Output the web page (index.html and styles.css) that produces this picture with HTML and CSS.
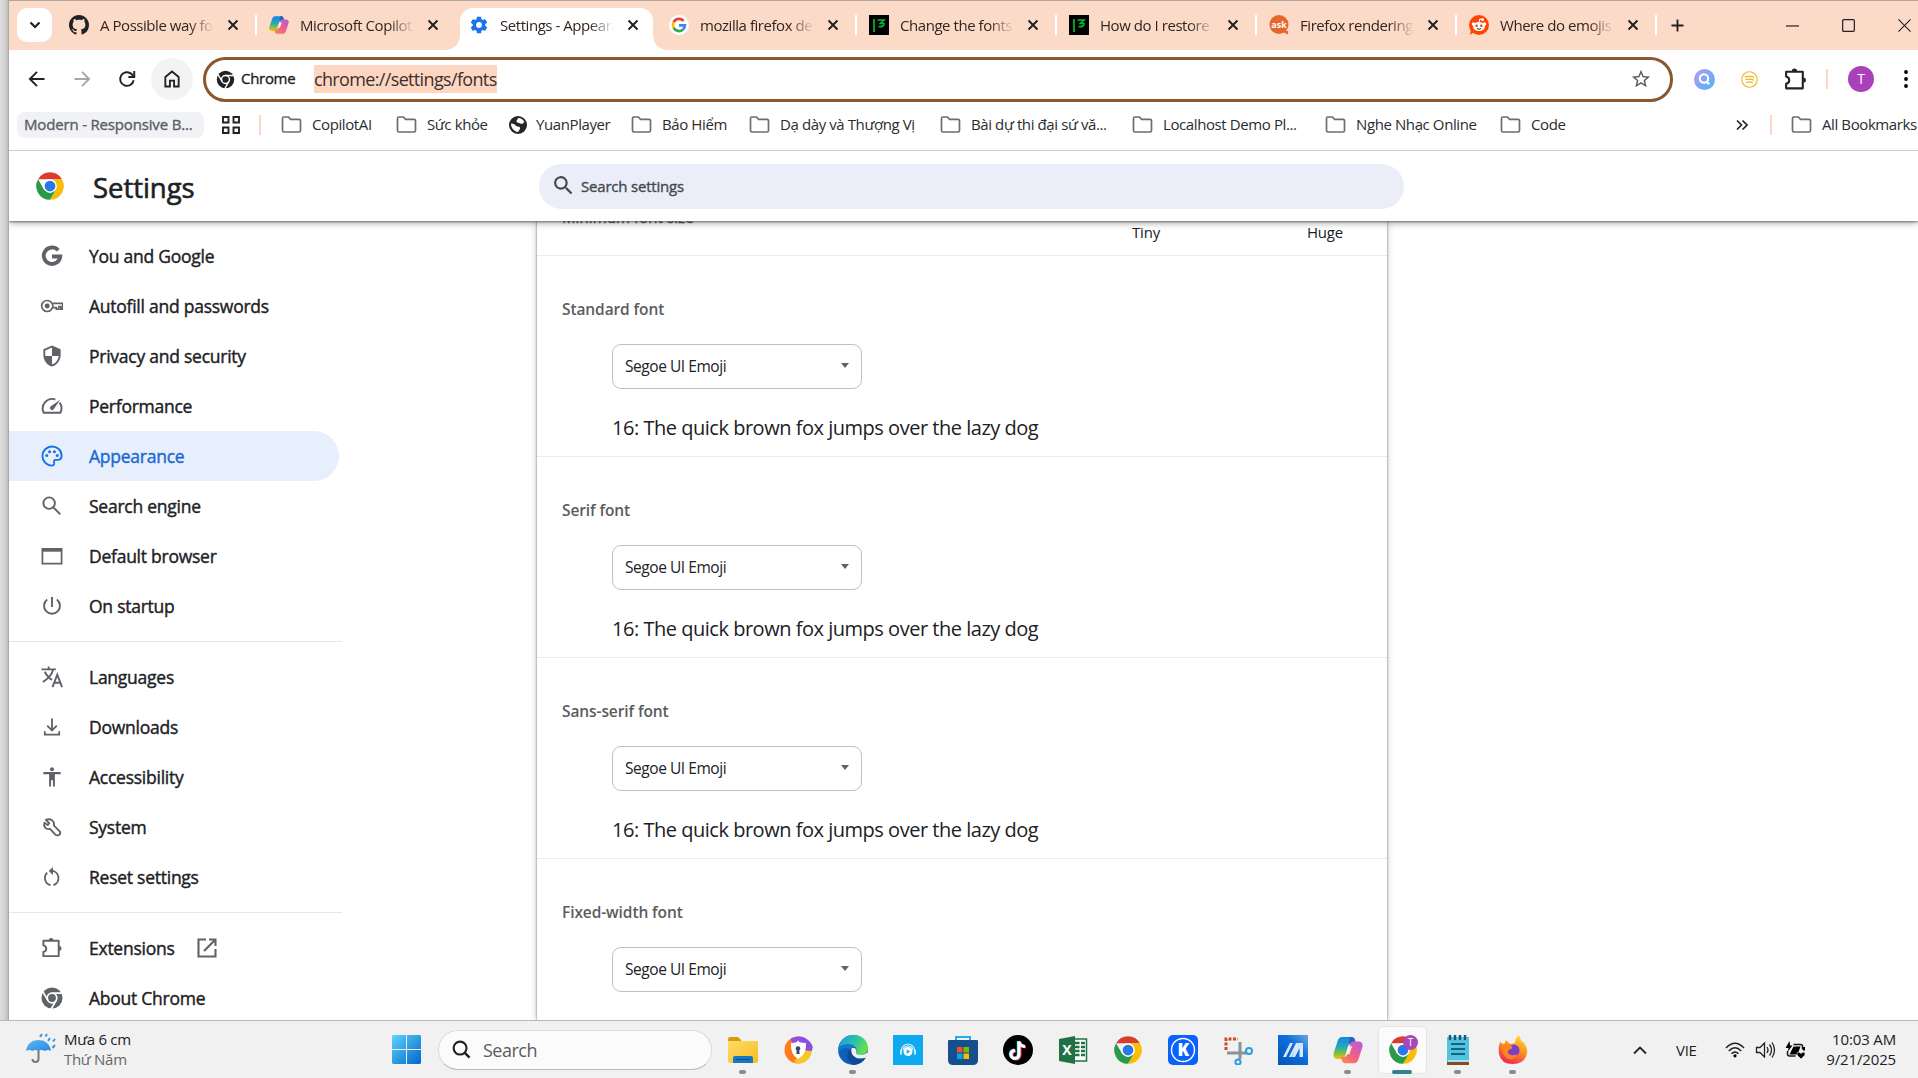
FILE: index.html
```html
<!DOCTYPE html>
<html lang="en">
<head>
<meta charset="utf-8">
<title>Settings - Appearance</title>
<link rel="stylesheet" href="styles.css">
</head>
<body>
<svg class="sprite" aria-hidden="true">
  <defs>
    <linearGradient id="gCopA" x1="0" y1="0" x2="0" y2="1"><stop offset="0" stop-color="#1686e0"/><stop offset=".45" stop-color="#22a7c4"/><stop offset=".72" stop-color="#73c045"/><stop offset="1" stop-color="#f4c20d"/></linearGradient>
    <linearGradient id="gCopB" x1="1" y1="0" x2="0" y2="1"><stop offset="0" stop-color="#b45ae0"/><stop offset=".5" stop-color="#ec5f8d"/><stop offset="1" stop-color="#ff8b45"/></linearGradient>
    <linearGradient id="gWin" x1="0" y1="0" x2="1" y2="1"><stop offset="0" stop-color="#5fd4fb"/><stop offset="1" stop-color="#0067c8"/></linearGradient>
    <linearGradient id="gEdge" x1="0" y1="0" x2="1" y2=".4"><stop offset="0" stop-color="#1b9de0"/><stop offset=".6" stop-color="#2cc3a5"/><stop offset="1" stop-color="#66dd4f"/></linearGradient>
    <linearGradient id="gFire" x1=".8" y1="0" x2=".3" y2="1"><stop offset="0" stop-color="#ffe22e"/><stop offset=".45" stop-color="#ff9220"/><stop offset="1" stop-color="#ee2453"/></linearGradient>
    <linearGradient id="gBlue" x1="0" y1="1" x2="1" y2="0"><stop offset="0" stop-color="#0554b4"/><stop offset=".6" stop-color="#0f6ede"/><stop offset="1" stop-color="#6da4e4"/></linearGradient>
    <linearGradient id="gLens" x1="0" y1="0" x2="1" y2="1"><stop offset="0" stop-color="#b69cf5"/><stop offset="1" stop-color="#4db5f5"/></linearGradient>
    <linearGradient id="gFold" x1="0" y1="0" x2="1" y2="1"><stop offset="0" stop-color="#ffdd66"/><stop offset="1" stop-color="#f8bc22"/></linearGradient>
    <linearGradient id="gUmb" x1="0" y1="0" x2="1" y2="1"><stop offset="0" stop-color="#64b9f5"/><stop offset="1" stop-color="#2587e0"/></linearGradient>
  </defs>
  <symbol id="close" viewBox="0 0 12 12"><path d="M1.500 1.500l9 9M10.500 1.500l-9 9" stroke="currentColor" stroke-width="2" fill="none"/></symbol>
  <symbol id="github" viewBox="0 0 16 16"><path fill="currentColor" d="M8 0C3.580 0 0 3.580 0 8c0 3.540 2.290 6.530 5.470 7.590.4.070.55-.17.55-.38 0-.19-.01-.82-.01-1.490-2.010.37-2.530-.49-2.690-.94-.09-.23-.48-.94-.82-1.130-.28-.15-.68-.52-.01-.53.63-.01 1.080.58 1.230.82.72 1.210 1.870.87 2.330.66.07-.52.28-.87.51-1.070-1.780-.2-3.640-.89-3.640-3.950 0-.87.31-1.590.82-2.150-.08-.2-.36-1.020.08-2.120 0 0 .67-.21 2.200.82.64-.18 1.320-.27 2-.27s1.360.09 2 .27c1.530-1.040 2.200-.82 2.200-.82.44 1.100.16 1.920.08 2.120.51.56.82 1.270.82 2.150 0 3.070-1.870 3.750-3.650 3.950.29.25.54.73.54 1.480 0 1.070-.01 1.930-.01 2.200 0 .21.15.46.55.38A8.010 8.010 0 0 0 16 8c0-4.420-3.580-8-8-8z"/></symbol>
  <symbol id="copilot" viewBox="0 0 32 32"><path fill="url(#gCopA)" d="M10 2h9c2 0 3 1 3.600 3l1 4h-4c-2 0-3 1-3.600 3l-3 10c-.8 2.500-2 3.500-4 3.500H5c-4 0-5.500-3-4-7L5 6c1-2.700 2.500-4 5-4z"/><path fill="#2456c9" d="M18 2h2c2 0 3 1 3.600 3l1 4h-5c-1.500 0-2.500.6-3.200 2z" opacity=".8"/><path fill="url(#gCopB)" d="M22 30h-9c-2 0-3-1-3.600-3l-1-3.600h3c2 0 3-1 3.600-3l3-10c.7-2.300 2-3.400 4-3.400h5c4 0 5.500 3 4 7l-4 12c-1 2.700-2.500 4-5 4z"/><path fill="#fff" opacity=".85" d="M17 12h3.500l-3 8.500H14z"/></symbol>
  <symbol id="gear" viewBox="0 0 24 24"><path fill="#1a73e8" fill-rule="evenodd" d="M19.430 13c.04-.32.07-.65.07-1s-.03-.68-.07-1l2.110-1.650c.2-.15.250-.42.120-.64l-2-3.460c-.12-.22-.38-.3-.61-.22l-2.490 1a7.300 7.300 0 0 0-1.690-.98l-.38-2.650A.5.5 0 0 0 14 2h-4c-.25 0-.46.180-.49.420l-.38 2.650c-.61.250-1.170.590-1.690.980l-2.490-1c-.23-.09-.49 0-.61.220l-2 3.460c-.13.220-.07.490.120.640L4.570 11c-.04.320-.07.660-.07 1s.03.680.07 1l-2.110 1.650c-.19.150-.24.420-.12.640l2 3.460c.12.220.39.300.61.220l2.490-1c.52.400 1.080.730 1.690.980l.38 2.650c.03.240.24.400.49.400h4c.25 0 .46-.18.49-.42l.38-2.650c.61-.25 1.170-.59 1.690-.98l2.490 1c.23.090.49 0 .61-.22l2-3.460a.5.5 0 0 0-.12-.64zM12 15.500a3.500 3.500 0 1 1 0-7 3.500 3.500 0 0 1 0 7z"/></symbol>
  <symbol id="google" viewBox="0 0 20 20"><circle cx="10" cy="10" r="10" fill="#fff"/><g fill="none" stroke-width="2.700"><path stroke="#ea4335" d="M14.600 5.800A6 6 0 0 0 4.700 7.200"/><path stroke="#fbbc05" d="M4.700 7.200a6 6 0 0 0 0 5.600"/><path stroke="#34a853" d="M4.700 12.800a6 6 0 0 0 9.300 1.700"/><path stroke="#4285f4" d="M14 14.500a6 6 0 0 0 2-4.200H10"/></g></symbol>
  <symbol id="bm" viewBox="0 0 20 20"><path d="M0 0h20v20H0z"/><path d="M5 4v13M8.500 5h6.500l-3.500 3.500h3.500c.5 2.500-2 3.500-5.500 3" fill="none" stroke="#08b82c" stroke-width="1.700"/></symbol>
  <symbol id="ask" viewBox="0 0 20 20"><circle cx="10" cy="9.500" r="9.500" fill="#e5672d"/><path d="M12 16h7v3.500z" fill="#e5672d"/><text x="10" y="12.500" text-anchor="middle" font-size="9" font-weight="700" fill="#fff" font-family="Open Sans, sans-serif">ask</text></symbol>
  <symbol id="reddit" viewBox="0 0 20 20"><circle cx="10" cy="10" r="10" fill="#ff4500"/><path d="M1 20l4-3-3-3z" fill="#ff4500"/><ellipse cx="10" cy="11.500" rx="6" ry="4.600" fill="#fff"/><circle cx="4.500" cy="9" r="1.700" fill="#fff"/><circle cx="15.500" cy="9" r="1.700" fill="#fff"/><circle cx="13.500" cy="4.500" r="1.500" fill="#fff"/><path d="M10 8l.8-4 2.500.6" stroke="#fff" fill="none"/><circle cx="7.700" cy="10.700" r="1.200" fill="#e33c00"/><circle cx="12.300" cy="10.700" r="1.200" fill="#e33c00"/><path d="M8 13.500q2 1.500 4 0" stroke="#222" fill="none"/></symbol>
  <symbol id="chromeMono" viewBox="0 0 24 24"><path fill="currentColor" fill-rule="evenodd" d="M12 1a11 11 0 1 0 0 22 11 11 0 0 0 0-22z"/><g fill="none" stroke="#fff" stroke-width="1.800"><circle cx="12" cy="12" r="5"/><path d="M12 7h10.500M7.700 14.500L2.400 5.400M16.300 14.500L11 23.700"/></g></symbol>
  <symbol id="chrome" viewBox="0 0 24 24"><path fill="#dc3b2e" d="M2.470 6.500a11 11 0 0 1 19.060 0H12z"/><path fill="#fbbc04" d="M21.530 6.500A11 11 0 0 1 12 23l4.760-8.250L12 6.500z"/><path fill="#2a9a4a" d="M2.470 6.500A11 11 0 0 0 12 23l4.760-8.250L7.200 14.700z"/><circle cx="12" cy="12" r="5.500" fill="#fff"/><circle cx="12" cy="12" r="4.300" fill="#2878e8"/></symbol>
  <symbol id="folder" viewBox="0 0 20 17"><path d="M1 2.500Q1 1 2.500 1H7l2 2.300h8.500Q19 3.300 19 4.800v9.700q0 1.500-1.500 1.500h-15Q1 16 1 14.500z" fill="none" stroke="#6b6e71" stroke-width="1.700"/></symbol>
  <symbol id="puzzle" viewBox="0 0 24 24"><path fill="none" stroke="currentColor" stroke-width="2" stroke-linejoin="round" d="M3 4.500h16v16H3v-4.500q3-.5 3-3.300T3 9.200z"/><path fill="currentColor" d="M8.500 4a2.500 2.500 0 0 1 5 0zM19.500 10a2.500 2.500 0 0 1 0 5z"/></symbol>
  <symbol id="search" viewBox="0 0 24 24"><path fill="currentColor" d="M15.500 14h-.79l-.28-.27A6.500 6.500 0 1 0 13.730 14.430l.27.280v.79l5 4.990L20.490 19zm-6 0a4.500 4.500 0 1 1 0-9 4.500 4.500 0 0 1 0 9z"/></symbol>
</svg>

<div class="screen">
  <div class="desktop">
    <div class="gutter"></div>
    <div class="window">
      <header class="tabstrip">
        <button class="tab-search"><svg viewBox="0 0 12 12" width="12" height="12"><path d="M1.500 3.500L6 8l4.500-4.500" fill="none" stroke="currentColor" stroke-width="2.200"/></svg></button>
        <div class="tab"><svg class="fav"><use href="#github"/></svg><span class="tab-title">A Possible way for</span><svg class="x"><use href="#close"/></svg></div>
        <div class="tab no-line"><svg class="fav"><use href="#copilot"/></svg><span class="tab-title">Microsoft Copilot:</span><svg class="x"><use href="#close"/></svg></div>
        <div class="tab active no-line"><svg class="fav"><use href="#gear"/></svg><span class="tab-title">Settings - Appearan</span><svg class="x"><use href="#close"/></svg></div>
        <div class="tab"><svg class="fav"><use href="#google"/></svg><span class="tab-title">mozilla firefox dev</span><svg class="x"><use href="#close"/></svg></div>
        <div class="tab"><svg class="fav"><use href="#bm"/></svg><span class="tab-title">Change the fonts y</span><svg class="x"><use href="#close"/></svg></div>
        <div class="tab"><svg class="fav"><use href="#bm"/></svg><span class="tab-title">How do I restore th</span><svg class="x"><use href="#close"/></svg></div>
        <div class="tab"><svg class="fav"><use href="#ask"/></svg><span class="tab-title">Firefox rendering is</span><svg class="x"><use href="#close"/></svg></div>
        <div class="tab"><svg class="fav"><use href="#reddit"/></svg><span class="tab-title">Where do emojis c</span><svg class="x"><use href="#close"/></svg></div>
        <svg class="new-tab" viewBox="0 0 14 14"><path d="M7 .5v13M.5 7h13" stroke="currentColor" stroke-width="2"/></svg>
        <div class="window-buttons">
          <svg viewBox="0 0 14 14"><path d="M0 7.500h14" stroke="currentColor" stroke-width="1.300"/></svg>
          <svg viewBox="0 0 14 14"><rect x=".7" y=".7" width="12.600" height="12.600" rx="1.200" fill="none" stroke="currentColor" stroke-width="1.300"/></svg>
          <svg viewBox="0 0 14 14"><path d="M.5.500l13 13M13.500.500l-13 13" stroke="currentColor" stroke-width="1.200"/></svg>
        </div>
      </header>

      <div class="toolbar">
        <div class="nav-btn"><svg viewBox="0 0 24 24"><path d="M21 12H4.500M12 3.500L3.500 12l8.500 8.500" fill="none" stroke="#222" stroke-width="2.300"/></svg></div>
        <div class="nav-btn"><svg viewBox="0 0 24 24"><path d="M3 12h16.500M12 3.500l8.500 8.500-8.500 8.500" fill="none" stroke="#a6a6a6" stroke-width="2.200"/></svg></div>
        <div class="nav-btn"><svg viewBox="0 0 24 24"><path d="M20 13.500A8.200 8.200 0 1 1 17.500 6l2.200 2.200" fill="none" stroke="#222" stroke-width="2.300"/><path d="M20.700 2.500v7h-7" fill="none" stroke="#222" stroke-width="2.300"/></svg></div>
        <div class="nav-btn home"><svg viewBox="0 0 24 24"><path d="M4 9.500L12 3l8 6.500V21h-5.500v-7h-5v7H4z" fill="none" stroke="#222" stroke-width="2.200"/></svg></div>
        <div class="omnibox">
          <svg class="omni-chrome"><use href="#chromeMono"/></svg>
          <span class="omni-label">Chrome</span>
          <span class="omni-url">chrome://settings/fonts</span>
          <svg class="star" viewBox="0 0 24 24"><path fill="#5a5d60" d="M22 9.240l-7.190-.62L12 2 9.190 8.630 2 9.240l5.460 4.730L5.820 21 12 17.270 18.180 21l-1.630-7.030zM12 15.400l-3.760 2.270 1-4.280-3.320-2.880 4.380-.38L12 6.100l1.710 4.040 4.380.38-3.320 2.880 1 4.280z"/></svg>
        </div>
        <div class="ext-area">
          <svg class="ext" viewBox="0 0 20 20"><circle cx="10" cy="10" r="10" fill="url(#gLens)"/><circle cx="9.500" cy="9" r="4" fill="none" stroke="#fff" stroke-width="2"/><path d="M12 12l2.500 2.500" stroke="#fff" stroke-width="2.200"/></svg>
          <svg class="ext small" viewBox="0 0 18 18"><circle cx="9" cy="9" r="8.200" fill="none" stroke="#eebc2c" stroke-width="1.200"/><path d="M4 6.500q5-1.800 10 .4M4.500 9.300q4.500-1.500 9 .3M5.500 12q4-1 7 .3" fill="none" stroke="#ebb41b" stroke-width="1.300"/></svg>
          <svg class="ext puzzle"><use href="#puzzle"/></svg>
          <i class="bar"></i>
          <span class="avatar">T</span>
          <svg class="menu-dots" viewBox="0 0 4 20"><circle cx="2" cy="3" r="1.900"/><circle cx="2" cy="10" r="1.900"/><circle cx="2" cy="17" r="1.900"/></svg>
        </div>
      </div>

      <nav class="bookmarks">
        <span class="group">Modern - Responsive B...</span>
        <svg class="apps" viewBox="0 0 18 18"><path d="M1 1h5.500v5.500H1zM11.500 1H17v5.500h-5.500zM1 11.500h5.500V17H1zM11.500 11.500H17V17h-5.500z" fill="none" stroke="#222" stroke-width="1.900"/></svg>
        <i class="bar"></i>
        <span class="bk b1"><svg class="fold"><use href="#folder"/></svg>CopilotAI</span>
        <span class="bk b2"><svg class="fold"><use href="#folder"/></svg>Sức khỏe</span>
        <span class="bk b3"><svg class="globe" viewBox="0 0 18 18"><circle cx="9" cy="9" r="9" fill="#24272a"/><path d="M2 7.500c3 0 4 1 5 2.300 1.400 1.500 3 .2 4 1.700.7 1.400-1 2.500-2 4.500C5 15.500 2 12 2 7.500zM9 2c3 0 5 1.500 6.300 4-1 1.700-2.500 2.300-4 1.500C9.700 6.700 8 7 7.500 5.500 7.200 4.200 9 3.500 9 2z" fill="#fff"/></svg>YuanPlayer</span>
        <span class="bk b4"><svg class="fold"><use href="#folder"/></svg>Bảo Hiểm</span>
        <span class="bk b5"><svg class="fold"><use href="#folder"/></svg>Dạ dày và Thượng Vị</span>
        <span class="bk b6"><svg class="fold"><use href="#folder"/></svg>Bài dự thi đại sứ vă...</span>
        <span class="bk b7"><svg class="fold"><use href="#folder"/></svg>Localhost Demo Pl...</span>
        <span class="bk b8"><svg class="fold"><use href="#folder"/></svg>Nghe Nhạc Online</span>
        <span class="bk b9"><svg class="fold"><use href="#folder"/></svg>Code</span>
        <svg class="more" viewBox="0 0 12 12"><path d="M1 1.500L5.500 6 1 10.500M6.500 1.500L11 6l-4.500 4.500" fill="none" stroke="#222" stroke-width="1.700"/></svg>
        <i class="bar last"></i>
        <span class="bk b10"><svg class="fold"><use href="#folder"/></svg>All Bookmarks</span>
      </nav>

      <div class="page">
        <header class="page-head">
          <svg class="logo"><use href="#chrome"/></svg>
          <h1>Settings</h1>
          <div class="page-search"><svg><use href="#search"/></svg>Search settings</div>
        </header>
        <div class="page-body">
          <aside class="sidebar">
            <a class="item"><svg viewBox="0 0 24 24"><path d="M18.500 6A8.600 8.600 0 1 0 20.600 12.500H12" fill="none" stroke="currentColor" stroke-width="4"/></svg>You and Google</a>
            <a class="item"><svg viewBox="0 0 24 24"><g fill="none" stroke="currentColor" stroke-width="1.700"><path d="M12.500 9.200H23v6h-1.800v-2.700h-2v2.700h-2.700v-1.500h-4"/><circle cx="7" cy="12" r="5.800"/></g><circle cx="7" cy="12" r="2.600" fill="currentColor"/></svg>Autofill and passwords</a>
            <a class="item"><svg viewBox="0 0 24 24"><path fill="currentColor" fill-rule="evenodd" d="M12 1L3 5v6c0 5.550 3.840 10.740 9 12 5.160-1.260 9-6.450 9-12V5zm0 11H5V6.300l7-3.110zv8.930c3.720-1.150 6.470-4.820 7-8.930z"/></svg>Privacy and security</a>
            <a class="item"><svg viewBox="0 0 24 24"><path fill="none" stroke="currentColor" stroke-width="2" d="M15.500 5.200A10 10 0 0 0 3.300 19H20.700A10 10 0 0 0 20 8.500"/><path fill="currentColor" d="M20.500 5.500l-6.700 10a2 2 0 1 1-3.400-2.900z"/></svg>Performance</a>
            <a class="item selected"><svg viewBox="0 0 24 24"><path fill="none" stroke="currentColor" stroke-width="2" d="M12 2a10 10 0 1 0 0 20c1.500 0 2.500-1.200 2.300-2.500-.2-1.700-.8-3 1-3.500H18c2.500 0 4-1.500 4-4.500C22 6 17.500 2 12 2z"/><g fill="currentColor"><circle cx="6.500" cy="11.500" r="1.600"/><circle cx="9.500" cy="7.500" r="1.600"/><circle cx="14.500" cy="7.500" r="1.600"/><circle cx="17.500" cy="11.500" r="1.600"/></g></svg>Appearance</a>
            <a class="item"><svg viewBox="0 0 24 24"><path fill="none" stroke="currentColor" stroke-width="2" d="M15 9a6 6 0 1 1-12 0 6 6 0 0 1 12 0zM13.300 13.300l7.400 7.400"/></svg>Search engine</a>
            <a class="item"><svg viewBox="0 0 24 24"><path fill="none" stroke="currentColor" stroke-width="1.800" d="M2 4.500h20v15.500H2z"/><path d="M2 4h20v3.500H2z" fill="currentColor"/></svg>Default browser</a>
            <a class="item"><svg viewBox="0 0 24 24"><path fill="none" stroke="currentColor" stroke-width="2" d="M12 2.500V13M17 5.200a8.300 8.300 0 1 1-10 0"/></svg>On startup</a>
            <hr>
            <a class="item"><svg viewBox="0 0 24 24"><path fill="none" stroke="currentColor" stroke-width="2" d="M1 4h15M8.500 1v3M13 5C11.500 10 7 14.500 2.500 17M4.500 6.500c2 4 4 6.500 7.500 8.500M12.500 22.500l5-13 5 13M14.300 18h6.500"/></svg>Languages</a>
            <a class="item"><svg viewBox="0 0 24 24"><path fill="none" stroke="currentColor" stroke-width="1.900" d="M12 3v12M7 10.500l5 5 5-5M4.500 16.500v3.500h15v-3.500"/></svg>Downloads</a>
            <a class="item"><svg viewBox="0 0 24 24"><circle cx="12" cy="3.800" r="2.100" fill="currentColor"/><path fill="currentColor" d="M3 6.800h18v2.200h-6V22h-2v-6.500h-2V22H9V9H3z"/></svg>Accessibility</a>
            <a class="item"><svg viewBox="0 0 24 24"><path fill="none" stroke="currentColor" stroke-width="1.900" stroke-linejoin="round" d="M5.500 4.500L9 8 7.500 10 4 7.500c-1.200 4 1.500 7.300 6 6.500l5.500 6c1 1 3.500 1 4.500-.3s.8-2.500-.2-3.500L14 10.500C15 6 11 2.500 5.500 4.500z"/></svg>System</a>
            <a class="item"><svg viewBox="0 0 24 24"><path fill="none" stroke="currentColor" stroke-width="1.900" d="M10.500 20.500A7.700 7.700 0 0 1 7 7.500M13.500 20.500A7.700 7.700 0 0 0 11 5.500"/><path d="M13 1.500L8.500 5.700l4.500 4.200z" fill="currentColor"/></svg>Reset settings</a>
            <hr>
            <a class="item"><svg><use href="#puzzle"/></svg>Extensions<svg class="external" viewBox="0 0 20 20"><path fill="none" stroke="currentColor" stroke-width="2.100" d="M9 1.500H1.500v17h17V11M12 1.500h6.500V8M18 2L7 13"/></svg></a>
            <a class="item"><svg><use href="#chromeMono"/></svg>About Chrome</a>
          </aside>

          <main class="card">
            <section class="row first"><span class="min-label">Minimum font size</span><span class="tiny">Tiny</span><span class="huge">Huge</span></section>
            <section class="row"><h2>Standard font</h2><div class="select">Segoe UI Emoji<i></i></div><p>16: The quick brown fox jumps over the lazy dog</p></section>
            <section class="row"><h2>Serif font</h2><div class="select">Segoe UI Emoji<i></i></div><p>16: The quick brown fox jumps over the lazy dog</p></section>
            <section class="row"><h2>Sans-serif font</h2><div class="select">Segoe UI Emoji<i></i></div><p>16: The quick brown fox jumps over the lazy dog</p></section>
            <section class="row"><h2>Fixed-width font</h2><div class="select">Segoe UI Emoji<i></i></div></section>
          </main>
        </div>
      </div>
    </div>
  </div>

  <footer class="taskbar">
    <div class="weather">
      <svg viewBox="0 0 30 32"><path d="M12.500 8v18q0 3-3 3t-3-3" fill="none" stroke="#75797d" stroke-width="2"/><path d="M0 18C1 10 7 7 12.500 7S24 10 25 18q-3-2-6.200 0-3.200-2-6.300 0-3-2-6.200 0Q3 16 0 18z" fill="url(#gUmb)"/><path d="M16 1l-2 3M21 1l-1.500 2.500M24 5l-2 3M29 6l-2 2.500M29 12l-2.500 3" stroke="#3b96dd" stroke-width="2"/></svg>
      <div><b>Mưa 6 cm</b><span>Thứ Năm</span></div>
    </div>
    <svg class="start" viewBox="0 0 30 30"><path fill="url(#gWin)" d="M1.500 0h13v14.500H0v-13Q0 0 1.500 0zM15.500 0h13Q30 0 30 1.500v13H15.500zM0 15.500h14.500V30h-13Q0 30 0 28.500zM15.500 15.500H30v13q0 1.500-1.500 1.500h-13z"/></svg>
    <div class="task-search"><svg viewBox="0 0 20 20"><circle cx="8.500" cy="8.500" r="6.800" fill="none" stroke="#222" stroke-width="2.200"/><path d="M13.500 13.500l5 5" stroke="#222" stroke-width="2.600"/></svg>Search</div>
    <div class="apps-row">
      <div class="app run"><svg viewBox="0 0 30 30"><path d="M0 4q0-2 2-2h8l3 3v5H0z" fill="#d99a0b"/><path d="M0 6h30v20q0 2-2 2H2q-2 0-2-2z" fill="url(#gFold)"/><path d="M5 28v-5q0-2 2-2h16q2 0 2 2v5z" fill="#1877c5"/><path d="M8 24.500h14" stroke="#0c4f91"/></svg></div>
      <div class="app"><svg viewBox="0 0 30 30"><circle cx="15" cy="15" r="13.500" fill="#ff7a1a"/><path d="M8 3.500Q18-1 25 5t3.500 11L20 17 9 10z" fill="#8b4fe6"/><path d="M28.500 16Q28 25 19 28q-4 1-8-1l8-12z" fill="#f8c52b"/><path d="M8 8q7 0 7-3 0 3 8 3 1 11-8 16Q7 19 8 8z" fill="#fff"/><circle cx="15" cy="13.500" r="2.300" fill="#34466a"/><path d="M14 14h2l.6 5h-3.200z" fill="#34466a"/></svg></div>
      <div class="app run"><svg viewBox="0 0 30 30"><circle cx="15" cy="15" r="15" fill="#1378d0"/><path d="M1 12Q4 0 16 0c9 0 14 7 14 13 0 5-4 7-9 7-2 0-4-1-3-3 2-5-3-8-8-8-4 0-8 2-9 3z" fill="url(#gEdge)"/><path d="M11 14q-4 9 4 15Q3 29 1 17q4-6 10-3z" fill="#1260b5"/><path d="M17 12q-5 6 1 11 5 2 9.500 0Q23 30 15 30q-8-5-5-13 2-5 7-5z" fill="#104a94"/><path d="M13.500 13q5-1 4.500 4-1 2 3 3 5 0 9-2.500v4.500q-5 2-11.500 1Q12 20 13.500 13z" fill="#f1f1f1"/></svg></div>
      <div class="app"><svg viewBox="0 0 30 30"><path fill="#0daaf0" d="M0 0h30v30H0z"/><circle cx="15" cy="16.500" r="4.500" fill="#fff"/><path d="M8 17a7 8 0 0 1 14 0M10 15a5.300 6 0 0 1 10 0" fill="none" stroke="#ddf5ff" stroke-width="1.100"/><path d="M8 15v4.500M22 15v4.500" stroke="#ddf5ff" stroke-width="1.800"/><path d="M13.700 14.500v4.200l3.500-2.100z" fill="#0daaf0"/></svg></div>
      <div class="app"><svg viewBox="0 0 30 30"><path d="M8 6V2h14v4" fill="none" stroke="#21aef0" stroke-width="2"/><path d="M0 6q0-1 1-1h28q1 0 1 1v19q0 5-5 5H5q-5 0-5-5z" fill="#164f8e"/><path d="M9 12h5.500v5.500H9z" fill="#f25022"/><path d="M15.500 12H21v5.500h-5.500z" fill="#7fba00"/><path d="M9 18.500h5.500V24H9z" fill="#00a4ef"/><path d="M15.500 18.500H21V24h-5.500z" fill="#ffb900"/></svg></div>
      <div class="app"><svg viewBox="0 0 30 30"><circle cx="15" cy="15" r="15"/><g fill="none" stroke-width="3"><path d="M15.300 6v13a4 4 0 1 1-4-4M15.300 6q1 5 6 5" stroke="#24f1ea"/><path d="M17 7v13a4 4 0 1 1-4-4M17 7q1 5 6 5" stroke="#fe2c55"/><path d="M16 6.500v13a4 4 0 1 1-4-4M16 6.500q1 5 6 5" stroke="#fff"/></g></svg></div>
      <div class="app"><svg viewBox="0 0 30 30"><path d="M15 4h13.500v22H15z" fill="#fff" stroke="#207245" stroke-width="1.500"/><path d="M17 8h4.500M17 12h4.500M17 16h4.500M17 20h4.500M23 8h4M23 12h4M23 16h4M23 20h4" stroke="#207245" stroke-width="2.400"/><path d="M1 4l16-3v28L1 26z" fill="#207245"/><text x="9" y="20" text-anchor="middle" font-size="14" font-weight="700" fill="#fff" font-family="Open Sans, sans-serif">X</text></svg></div>
      <div class="app"><svg><use href="#chrome"/></svg></div>
      <div class="app"><svg viewBox="0 0 30 30"><rect width="30" height="30" rx="5" fill="#0b62fb"/><circle cx="15" cy="15" r="11.500" fill="none" stroke="#fff" stroke-width="1.400"/><text x="15.300" y="21" text-anchor="middle" font-size="17" font-weight="800" fill="#fff" font-family="Open Sans, sans-serif">K</text></svg></div>
      <div class="app"><svg viewBox="0 0 30 30"><path d="M3 15V4h12" fill="none" stroke="#c94a24" stroke-width="3" stroke-dasharray="3 1.500"/><path d="M17 7v17M4 18h20" stroke="#8c9296" stroke-width="3"/><g fill="none" stroke="#27a0dc" stroke-width="2"><circle cx="26" cy="16" r="3"/><circle cx="15" cy="27" r="2.600"/></g></svg></div>
      <div class="app"><svg viewBox="0 0 30 30"><path fill="url(#gBlue)" d="M0 0h30v30H0z"/><path d="M5 22L12 8h3L8 22zM11 22l7-14h2.500l-7 14zM20 8h5v14h-3.500V13L17 22h-3z" fill="#d7e8fb"/></svg></div>
      <div class="app run"><svg><use href="#copilot"/></svg></div>
      <div class="app run current"><svg viewBox="0 0 30 30"><use href="#chrome" width="30" height="30"/><circle cx="22.500" cy="7.500" r="7.500" fill="#a548b8"/><text x="22.500" y="11.300" text-anchor="middle" font-size="10" fill="#fff" font-family="Open Sans, sans-serif">T</text></svg></div>
      <div class="app run"><svg viewBox="0 0 30 30"><path d="M4 26h22v4H4z" fill="#8a4b20"/><path d="M4 2h22v25H4z" fill="#53c4df"/><path d="M5 26h21" stroke="#fff"/><path d="M7 0v4M12 0v4M17 0v4M22 0v4" stroke="#155a75" stroke-width="2.500" stroke-linecap="round"/><path d="M8 9h14M8 14h14M8 19h14" stroke="#14647f" stroke-width="2"/></svg></div>
      <div class="app run"><svg viewBox="0 0 30 30"><path d="M2 7l4 3 2-5 4 4 5-1q0-5 4-8 1 5 5 8 4 5 3 10-2 11-14 11Q3 29 1 19 0 12 2 7z" fill="url(#gFire)"/><circle cx="15.500" cy="15.500" r="6" fill="#7b3ecb"/><path d="M3 9q4-1 9 1 4 2 1 4-4 1-3 4 3 4 9 1-2 6-8 5-8-3-8-15z" fill="#ff841e"/></svg></div>
    </div>
    <div class="tray">
      <svg class="chev" viewBox="0 0 14 10"><path d="M1 8.500l6-6 6 6" fill="none" stroke="#222" stroke-width="1.800"/></svg>
      <span class="lang">VIE</span>
      <svg class="wifi" viewBox="0 0 20 16"><g fill="none" stroke="#222" stroke-width="1.500"><path d="M1 6q9-9.500 18 0M3.800 9q6.200-6.500 12.400 0M6.500 11.800q3.500-3.500 7 0"/></g><circle cx="10" cy="13.800" r="1.600"/></svg>
      <svg class="vol" viewBox="0 0 20 18"><g fill="none" stroke="#222" stroke-width="1.300"><path d="M1 6.500h3.500L9 2v14l-4.500-4.500H1zM11.500 6q2 3 0 6M14 3.500q4 5.500 0 11M16.500 1.500q5 7.500 0 15"/></g></svg>
      <svg class="bat" viewBox="0 0 20 18"><path d="M8 3.500h7q2 0 2 2v3M2 10v3q0 2 2 2h6" fill="none" stroke="#1a1a1a" stroke-width="1.500"/><path d="M8 5.500h7l-3 8H4zM17.500 6h2v3.500h-2z"/><path d="M4 0l-4 7h3L2 11l5-6.500H4.500z"/><path d="M15.500 18l-4-4q-.5-3 2-3l2 1.500 2-1.500q2.500 0 2 3z" stroke="#f1f1f1" stroke-width=".6"/></svg>
      <div class="clock"><span>10:03 AM</span><span>9/21/2025</span></div>
    </div>
  </footer>
</div>
</body>
</html>
```
FILE: styles.css
```css
* { box-sizing: border-box; }
body {
  margin: 0;
  font-family: "Open Sans", "Noto Sans", sans-serif;
  color: #202124;
  overflow: hidden;
}
svg { display: block; flex: none; }
.sprite { position: absolute; width: 0; height: 0; }
.screen { width: 1918px; height: 1078px; display: flex; flex-direction: column; overflow: hidden; }
.desktop { height: 1020px; display: flex; }
.gutter { width: 8px; background: linear-gradient(90deg, #dedede, #d2d2d2 60%, #bdbdbd); }
.window {
  flex: 1;
  min-width: 0;
  display: flex;
  flex-direction: column;
  border-left: 1px solid #a9a9a9;
  background: #fff;
}

/* Tab strip */
.tabstrip {
  height: 50px;
  display: flex;
  align-items: center;
  background: #fcdac8;
  border-top: 1px solid #b3a49c;
  padding: 0 0 1px 8px;
}
.tab-search {
  width: 35px; height: 34px; margin-right: 8px;
  display: flex; align-items: center; justify-content: center;
  border: 0; border-radius: 10px; background: #fff; color: #222; padding: 0;
}
.tab {
  position: relative;
  width: 200px; height: 48px;
  display: flex; align-items: center;
  padding-left: 9px;
}
.tab::after {
  content: ""; position: absolute; right: 3px; top: 14px;
  width: 2px; height: 20px; background: #fff;
}
.tab.no-line::after { display: none; }
.fav { width: 20px; height: 20px; margin-right: 11px; }
.tab-title {
  width: 114px; overflow: hidden; white-space: nowrap;
  font-size: 15px; letter-spacing: -.45px; line-height: 24px; color: #33251f;
  -webkit-mask-image: linear-gradient(90deg, #000 78%, transparent);
  mask-image: linear-gradient(90deg, #000 78%, transparent);
}
.x { width: 12px; height: 12px; margin-left: 13px; color: #222; }
.tab.active { z-index: 1; }
.tab.active::before {
  content: ""; position: absolute; z-index: -1; left: 0; right: 7px; top: 7px; bottom: -1px;
  background: #fff; border-radius: 13px 13px 0 0;
}
.tab.active::after {
  content: ""; display: block; z-index: -2; left: -14px; right: -7px; top: auto; bottom: -1px;
  width: auto; height: 14px;
  background:
    radial-gradient(circle at 0 0, transparent 13.500px, #fff 14px) left / 14px 14px no-repeat,
    radial-gradient(circle at 100% 0, transparent 13.500px, #fff 14px) right / 14px 14px no-repeat;
}
.new-tab { width: 13px; height: 13px; margin-left: 11px; }
.window-buttons { margin-left: auto; display: flex; gap: 43px; padding-right: 7px; }
.window-buttons svg { width: 13px; height: 13px; }

/* Toolbar */
.toolbar { height: 59px; display: flex; align-items: center; padding: 0 0 1px 7px; }
.nav-btn { width: 42px; height: 42px; margin-right: 3px; display: flex; align-items: center; justify-content: center; border-radius: 50%; }
.nav-btn svg { width: 20px; height: 20px; }
.nav-btn.home { background: #f3f3f3; margin-right: 10px; }
.omnibox {
  width: 1470px; height: 45px; margin-top: 1px;
  display: flex; align-items: center;
  border: 3px solid #8b572d; border-radius: 23px;
  padding: 0 18px 1px 10px;
}
.omni-chrome { width: 19px; height: 19px; margin-right: 6px; color: #222; }
.omni-label { width: 73px; font-size: 15px; letter-spacing: -.3px; line-height: 22px; padding-bottom: 2px; -webkit-text-stroke: .35px currentColor; }
.omni-url { font-size: 18px; line-height: 28px; letter-spacing: -.65px; background: #fdd6c2; color: #3b302b; }
.star { width: 22px; height: 22px; margin-left: auto; }
.ext-area { display: flex; align-items: center; margin-left: 21px; }
.ext { width: 21px; height: 21px; margin-right: 26px; }
.ext.small { width: 17px; height: 17px; margin-right: 25px; }
.ext.puzzle { width: 25px; height: 25px; color: #222; margin-right: 18px; }
.bar { display: block; flex: none; width: 2px; height: 20px; background: #fbd8c5; }
.avatar {
  width: 26px; height: 26px; margin: 0 30px 0 20px; border-radius: 50%;
  background: #a941ba; color: #fff; font-size: 14px; line-height: 26px; text-align: center;
}
.menu-dots { width: 4px; height: 20px; }

/* Bookmarks bar */
.bookmarks {
  height: 42px; display: flex; align-items: center;
  padding: 0 0 10px 8px; border-bottom: 1px solid #cfcfcf;
  font-size: 15px; letter-spacing: -.4px; white-space: nowrap; color: #2a2d30;
}
.group {
  width: 187px; height: 26px; padding: 0 7px; border-radius: 8px;
  background: #f1f2f5; color: #5a5e63; line-height: 25px; letter-spacing: -.17px;
  -webkit-text-stroke: .35px currentColor;
}
.apps { width: 18px; height: 18px; margin: 0 19px 0 18px; }
.bk { display: flex; align-items: center; flex: none; height: 24px; line-height: 22px; padding-bottom: 1px; }
.fold { width: 21px; height: 17px; margin: 1px 10px 0 0; }
.globe { width: 18px; height: 18px; margin: 1px 9px 0 0; }
.b1 { width: 115px; margin-left: 20px; }
.b2 { width: 113px; }
.b3 { width: 122px; }
.b4 { width: 118px; }
.b5 { width: 191px; }
.b6 { width: 192px; }
.b7 { width: 193px; }
.b8 { width: 175px; }
.b9 { width: 236px; }
.more { width: 12px; height: 12px; }
.bar.last { margin: 0 19px 0 22px; }

/* Settings page */
.page { flex: 1; min-height: 0; display: flex; flex-direction: column; overflow: hidden; }
.page-head {
  position: relative; z-index: 2; flex: none;
  height: 70px; display: flex; align-items: center;
  padding-left: 26px; background: #fff;
  box-shadow: 0 1px 2px rgba(0,0,0,.42), 0 2px 7px rgba(0,0,0,.34);
}
.logo { width: 30px; height: 30px; }
h1 { margin: 4px 0 0 28px; width: 446px; font-size: 27.500px; letter-spacing: -.05px; font-weight: 400; line-height: 36px; -webkit-text-stroke: .6px currentColor; }
.page-search {
  width: 865px; height: 45px; border-radius: 23px; background: #ebeef8;
  display: flex; align-items: center; padding: 0 0 1px 12px;
  font-size: 15px; letter-spacing: -.2px; color: #44484d; -webkit-text-stroke: .35px currentColor;
}
.page-search svg { width: 25px; height: 25px; margin-right: 5px; }
.page-body { flex: 1; min-height: 0; display: flex; overflow: hidden; }
.sidebar { width: 333px; flex: none; padding-top: 10px; }
.item {
  height: 50px; width: 330px; padding-left: 30.500px;
  display: flex; align-items: center;
  font-size: 17.500px; letter-spacing: -.25px; -webkit-text-stroke: .4px currentColor;
}
.item > svg:first-child { width: 24px; height: 24px; padding: .5px; margin-right: 25.500px; color: #5f6368; }
.item.selected { background: #e7effd; border-radius: 0 25px 25px 0; color: #2068d1; }
.item.selected > svg:first-child { color: #1a73e8; }
.external { width: 20px; height: 20px; margin-left: 22px; color: #5f6368; }
hr { margin: 10px 0; height: 1px; border: 0; background: #e6e6e6; }
.card {
  margin-left: 195px; width: 850px; background: #fff;
  box-shadow: 0 0 2px rgba(0,0,0,.5), 0 1px 7px rgba(0,0,0,.22);
}
.row { height: 201px; padding: 39px 25px 0; border-bottom: 1px solid #ebebeb; }
.row:last-child { border: 0; }
.row.first { height: 35px; padding: 0 25px; display: flex; font-size: 15px; letter-spacing: -.2px; line-height: 22px; }
.min-label { position: relative; z-index: 3; margin-top: -16px; width: 570px; height: 18px; line-height: 24px; letter-spacing: .1px; color: #444; clip-path: inset(12px 0 -6px 0); -webkit-text-stroke: .35px currentColor; }
.tiny { width: 175px; }
h2 { margin: 0; font-size: 15.500px; letter-spacing: -.1px; font-weight: 600; line-height: 28px; color: #5a5c5e; }
.select {
  width: 250px; height: 45px; margin: 21px 0 0 50px; padding: 0 12px 2px;
  display: flex; align-items: center; justify-content: space-between;
  border: 1px solid #bfc1c4; border-radius: 9px;
  font-size: 15.500px; letter-spacing: -.45px;
}
.select i { border: 4.500px solid transparent; border-top: 5px solid #5f6368; border-bottom: 0; }
.row p { margin: 23px 0 0 50px; font-size: 20px; letter-spacing: -.48px; line-height: 32px; white-space: nowrap; }

/* Taskbar */
.taskbar { height: 58px; display: flex; align-items: center; background: #f1f1f1; border-top: 1px solid #b8b8b8; }
.weather { width: 392px; padding: 0 0 1px 26px; display: flex; align-items: center; }
.weather svg { width: 30px; height: 32px; margin-right: 8px; }
.weather b, .weather span { display: block; font-weight: 400; font-size: 15px; letter-spacing: -.3px; line-height: 20px; }
.weather b { margin-top: -1px; }
.weather span { color: #666; }
.start { width: 29px; height: 29px; }
.task-search {
  width: 274px; height: 40px; margin-left: 17px; padding-left: 13px;
  display: flex; align-items: center; gap: 12px;
  border: 1px solid #dcdcdc; border-bottom-color: #bcbcbc; border-radius: 20px; background: #fbfbfb;
  font-size: 18px; letter-spacing: -.5px; color: #5c5c5c;
}
.task-search svg { width: 19px; height: 19px; }
.apps-row { display: flex; margin-left: 3px; }
.app { position: relative; width: 55px; height: 48px; display: flex; align-items: center; justify-content: center; }
.app svg { width: 30px; height: 30px; }
.app.run::after {
  content: ""; position: absolute; bottom: 0; left: 24px; width: 7px; height: 4px;
  border-radius: 2px; background: #8b8b8b;
}
.app.current::before { content: ""; position: absolute; inset: 0 3px; border: 1px solid #e5e5e5; border-radius: 5px; background: #fbfbfb; }
.app.current svg { position: relative; }
.app.current::after { left: 17px; width: 20px; background: #2f8291; }
.tray { margin-left: auto; padding-right: 22px; display: flex; align-items: center; color: #222; font-size: 15px; letter-spacing: -.3px; }
.chev { width: 14px; height: 10px; margin-right: 29px; }
.lang { width: 49px; }
.wifi { width: 20px; height: 16px; margin-right: 10px; }
.vol { width: 21px; height: 18px; margin-right: 9px; }
.bat { width: 21px; height: 18px; margin-right: 20px; }
.clock { width: 70px; display: flex; flex-direction: column; align-items: flex-end; line-height: 20px; margin-top: -2px; letter-spacing: -.15px; white-space: nowrap; }
```
